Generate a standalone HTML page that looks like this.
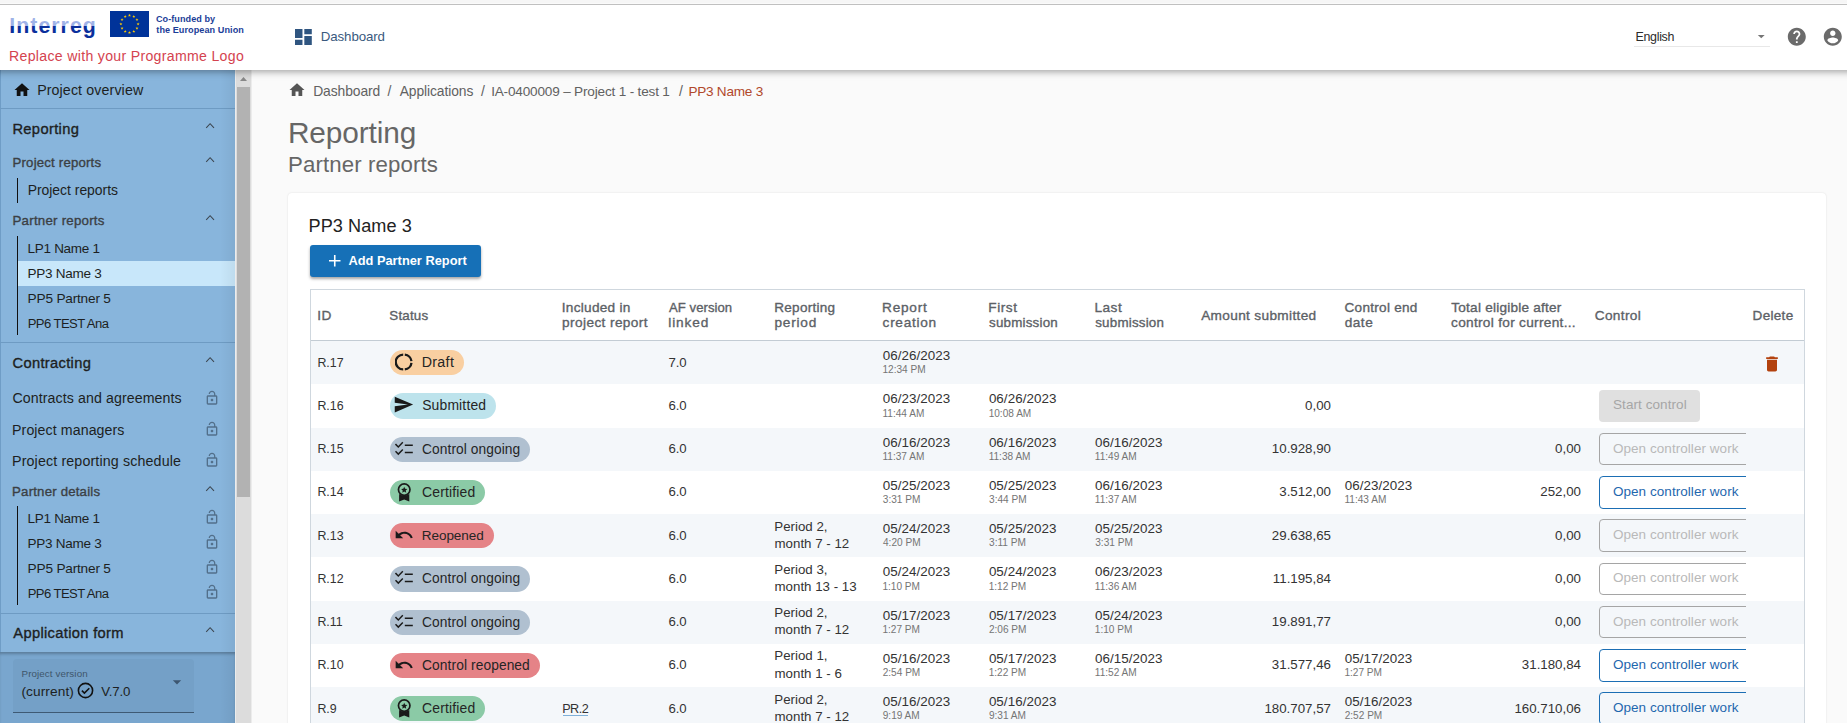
<!DOCTYPE html>
<html><head><meta charset="utf-8"><style>
html,body{margin:0;padding:0;width:1847px;height:723px;overflow:hidden;background:#fafafa;font-family:"Liberation Sans",sans-serif}
.t{position:absolute;white-space:nowrap;font-family:"Liberation Sans",sans-serif}
.r{position:absolute;display:block}
</style></head><body>
<div class="r" style="left:0px;top:0px;width:1847px;height:3px;background:#f6f6f6;z-index:7"></div>
<div class="r" style="left:0px;top:3px;width:1847px;height:1px;background:#fafafa;z-index:7"></div>
<div class="r" style="left:0px;top:4px;width:1847px;height:1px;background:#c0c0c0;z-index:7"></div>
<div class="r" style="left:-20px;top:5px;width:1887px;height:65px;background:#fff;box-shadow:0 2px 4px -1px rgba(0,0,0,.12),0 4px 5px 0 rgba(0,0,0,.12),0 1px 10px 0 rgba(0,0,0,.12);z-index:5"></div>
<svg class="r" style="left:0;top:0;z-index:6" width="105" height="45"><defs><linearGradient id="lg" gradientUnits="userSpaceOnUse" x1="0" y1="0" x2="0" y2="45"><stop offset="0" stop-color="#9fb2e7"/><stop offset="0.586" stop-color="#9fb2e7"/><stop offset="0.586" stop-color="#0b2f9c"/><stop offset="1" stop-color="#0b2f9c"/></linearGradient></defs><text x="9.3" y="32.8" font-family="Liberation Sans" font-weight="700" font-size="21.3" textLength="86.5" lengthAdjust="spacing" fill="url(#lg)">Interreg</text></svg>
<svg class="r" style="left:110px;top:11px;z-index:6" width="39" height="26" viewBox="0 0 39 26" preserveAspectRatio="none"><rect width="39" height="26" fill="#003399"/><polygon points="19.50,2.80 19.88,3.87 21.02,3.91 20.12,4.60 20.44,5.69 19.50,5.05 18.56,5.69 18.88,4.60 17.98,3.91 19.12,3.87" fill="#ffcc00"/><polygon points="23.80,3.95 24.18,5.03 25.32,5.06 24.42,5.75 24.74,6.85 23.80,6.20 22.86,6.85 23.18,5.75 22.28,5.06 23.42,5.03" fill="#ffcc00"/><polygon points="26.95,7.10 27.33,8.17 28.47,8.21 27.57,8.90 27.89,9.99 26.95,9.35 26.01,9.99 26.33,8.90 25.43,8.21 26.57,8.17" fill="#ffcc00"/><polygon points="28.10,11.40 28.48,12.47 29.62,12.51 28.72,13.20 29.04,14.29 28.10,13.65 27.16,14.29 27.48,13.20 26.58,12.51 27.72,12.47" fill="#ffcc00"/><polygon points="26.95,15.70 27.33,16.77 28.47,16.81 27.57,17.50 27.89,18.59 26.95,17.95 26.01,18.59 26.33,17.50 25.43,16.81 26.57,16.77" fill="#ffcc00"/><polygon points="23.80,18.85 24.18,19.92 25.32,19.95 24.42,20.65 24.74,21.74 23.80,21.10 22.86,21.74 23.18,20.65 22.28,19.95 23.42,19.92" fill="#ffcc00"/><polygon points="19.50,20.00 19.88,21.07 21.02,21.11 20.12,21.80 20.44,22.89 19.50,22.25 18.56,22.89 18.88,21.80 17.98,21.11 19.12,21.07" fill="#ffcc00"/><polygon points="15.20,18.85 15.58,19.92 16.72,19.95 15.82,20.65 16.14,21.74 15.20,21.10 14.26,21.74 14.58,20.65 13.68,19.95 14.82,19.92" fill="#ffcc00"/><polygon points="12.05,15.70 12.43,16.77 13.57,16.81 12.67,17.50 12.99,18.59 12.05,17.95 11.11,18.59 11.43,17.50 10.53,16.81 11.67,16.77" fill="#ffcc00"/><polygon points="10.90,11.40 11.28,12.47 12.42,12.51 11.52,13.20 11.84,14.29 10.90,13.65 9.96,14.29 10.28,13.20 9.38,12.51 10.52,12.47" fill="#ffcc00"/><polygon points="12.05,7.10 12.43,8.17 13.57,8.21 12.67,8.90 12.99,9.99 12.05,9.35 11.11,9.99 11.43,8.90 10.53,8.21 11.67,8.17" fill="#ffcc00"/><polygon points="15.20,3.95 15.58,5.03 16.72,5.06 15.82,5.75 16.14,6.85 15.20,6.20 14.26,6.85 14.58,5.75 13.68,5.06 14.82,5.03" fill="#ffcc00"/></svg>
<div class="t" style="left:156.03px;top:9.00px;font-size:9.08px;line-height:20px;color:#1b3d98;font-weight:700;letter-spacing:0.047px;z-index:6">Co-funded by</div>
<div class="t" style="left:156.29px;top:20.00px;font-size:9.11px;line-height:20px;color:#1b3d98;font-weight:700;letter-spacing:0.067px;z-index:6">the European Union</div>
<div class="t" style="left:9.04px;top:43.00px;font-size:14.11px;line-height:26px;color:#d4434f;letter-spacing:0.312px;z-index:6">Replace with your Programme Logo</div>
<svg class="r" style="left:295px;top:29px;z-index:6" width="16.8" height="16" viewBox="3 3 18 18" preserveAspectRatio="none"><path d="M3 13h8V3H3v10zm0 8h8v-6H3v6zm10 0h8V11h-8v10zm0-18v6h8V3h-8z" fill="#2f5580"/></svg>
<div class="t" style="left:320.81px;top:24.00px;font-size:13.31px;line-height:25px;color:#3a5a7e;letter-spacing:-0.108px;z-index:6">Dashboard</div>
<div class="t" style="left:1635.38px;top:25.00px;font-size:12.45px;line-height:24px;color:#2b2b2b;letter-spacing:-0.284px;z-index:6">English</div>
<div class="r" style="left:1634px;top:46px;width:136px;height:1px;background:#e8e8e8;z-index:6"></div>
<svg class="r" style="left:1752.5px;top:28.2px;z-index:6" width="16.5" height="16.5" viewBox="0 0 24 24" preserveAspectRatio="none"><path d="M7 10l5 5 5-5z" fill="#757575"/></svg>
<svg class="r" style="left:1786.2px;top:26px;z-index:6" width="21.6" height="21.6" viewBox="0 0 24 24" preserveAspectRatio="none"><path d="M12 2C6.48 2 2 6.48 2 12s4.48 10 10 10 10-4.48 10-10S17.52 2 12 2zm1 17h-2v-2h2v2zm2.07-7.75l-.9.92C13.45 12.9 13 13.5 13 15h-2v-.5c0-1.1.45-2.1 1.17-2.83l1.24-1.26c.37-.36.59-.86.59-1.41 0-1.1-.9-2-2-2s-2 .9-2 2H8c0-2.21 1.79-4 4-4s4 1.79 4 4c0 .88-.36 1.68-.93 2.25z" fill="#6b6b6b"/></svg>
<svg class="r" style="left:1822.2px;top:26px;z-index:6" width="21.6" height="21.6" viewBox="0 0 24 24" preserveAspectRatio="none"><path d="M12 2C6.48 2 2 6.48 2 12s4.48 10 10 10 10-4.48 10-10S17.52 2 12 2zm0 3c1.66 0 3 1.34 3 3s-1.34 3-3 3-3-1.34-3-3 1.34-3 3-3zm0 14.2c-2.5 0-4.71-1.28-6-3.22.03-1.99 4-3.08 6-3.08 1.99 0 5.970 1.09 6 3.08-1.29 1.94-3.5 3.22-6 3.22z" fill="#6b6b6b"/></svg>
<div class="r" style="left:252px;top:70px;width:1595px;height:653px;background:#fafafa;"></div>
<div class="r" style="left:0px;top:70px;width:235px;height:653px;background:#88b5dc;"></div>
<div class="r" style="left:0px;top:70px;width:1px;height:653px;background:#6f9dc6;"></div>
<div class="r" style="left:220px;top:70px;width:15px;height:653px;background:linear-gradient(90deg,rgba(0,0,0,0),rgba(0,0,0,.05));z-index:2"></div>
<svg class="r" style="left:12.5px;top:80.5px;" width="18" height="18" viewBox="0 0 24 24" preserveAspectRatio="none"><path d="M10 20v-6h4v6h5v-8h3L12 3 2 12h3v8z" fill="#111"/></svg>
<div class="t" style="left:37.13px;top:77.00px;font-size:14.23px;line-height:26px;color:#1d1f22;letter-spacing:0.116px;">Project overview</div>
<div class="r" style="left:0px;top:108px;width:235px;height:1px;background:#6e9bc3;"></div>
<div class="t" style="left:12.39px;top:116.00px;font-size:14.69px;line-height:26px;color:#1d1f22;-webkit-text-stroke:0.35px #1d1f22;letter-spacing:0.357px;">Reporting</div>
<svg class="r" style="left:204px;top:122.1px;" width="12" height="8" viewBox="0 0 12 8" preserveAspectRatio="none"><path d="M2.2 5.8 L6.1 1.7 L10 5.8" fill="none" stroke="#3c4650" stroke-width="1.05"/></svg>
<div class="t" style="left:12.52px;top:150.00px;font-size:13.21px;line-height:25px;color:#3b3f44;-webkit-text-stroke:0.35px #3b3f44;letter-spacing:0.190px;">Project reports</div>
<svg class="r" style="left:204px;top:156.3px;" width="12" height="8" viewBox="0 0 12 8" preserveAspectRatio="none"><path d="M2.2 5.8 L6.1 1.7 L10 5.8" fill="none" stroke="#3c4650" stroke-width="1.05"/></svg>
<div class="r" style="left:17px;top:178px;width:1.3px;height:25px;background:#111;"></div>
<div class="t" style="left:27.66px;top:177.00px;font-size:13.95px;line-height:26px;color:#1d1f22;letter-spacing:-0.019px;">Project reports</div>
<div class="t" style="left:12.51px;top:208.00px;font-size:13.3px;line-height:25px;color:#3b3f44;-webkit-text-stroke:0.35px #3b3f44;letter-spacing:0.233px;">Partner reports</div>
<svg class="r" style="left:204px;top:214px;" width="12" height="8" viewBox="0 0 12 8" preserveAspectRatio="none"><path d="M2.2 5.8 L6.1 1.7 L10 5.8" fill="none" stroke="#3c4650" stroke-width="1.05"/></svg>
<div class="r" style="left:18px;top:261px;width:217px;height:25px;background:#c8e7fa;"></div>
<div class="r" style="left:17px;top:236px;width:1.3px;height:99px;background:#111;"></div>
<div class="t" style="left:27.59px;top:236.00px;font-size:13.5px;line-height:25px;color:#1d1f22;letter-spacing:-0.297px;">LP1 Name 1</div>
<div class="t" style="left:27.59px;top:261.00px;font-size:13.54px;line-height:25px;color:#1d1f22;letter-spacing:-0.284px;">PP3 Name 3</div>
<div class="t" style="left:27.58px;top:286.00px;font-size:13.63px;line-height:25px;color:#1d1f22;letter-spacing:-0.185px;">PP5 Partner 5</div>
<div class="t" style="left:27.63px;top:311.00px;font-size:13.08px;line-height:25px;color:#1d1f22;letter-spacing:-0.557px;">PP6 TEST Ana</div>
<div class="r" style="left:0px;top:342px;width:235px;height:1px;background:#6e9bc3;"></div>
<div class="t" style="left:12.45px;top:350.00px;font-size:14.68px;line-height:26px;color:#1d1f22;-webkit-text-stroke:0.35px #1d1f22;letter-spacing:0.342px;">Contracting</div>
<svg class="r" style="left:204px;top:356px;" width="12" height="8" viewBox="0 0 12 8" preserveAspectRatio="none"><path d="M2.2 5.8 L6.1 1.7 L10 5.8" fill="none" stroke="#3c4650" stroke-width="1.05"/></svg>
<div class="t" style="left:12.48px;top:385.00px;font-size:14.18px;line-height:26px;color:#1d1f22;letter-spacing:0.093px;">Contracts and agreements</div>
<svg class="r" style="left:203.5px;top:390px;" width="16" height="16" viewBox="0 0 24 24" preserveAspectRatio="none"><path d="M12 17c1.1 0 2-.9 2-2s-.9-2-2-2-2 .9-2 2 .9 2 2 2zm6-9h-1V6c0-2.76-2.24-5-5-5S7 3.24 7 6h1.9c0-1.71 1.39-3.1 3.1-3.1 1.71 0 3.1 1.39 3.1 3.1v2H6c-1.1 0-2 .9-2 2v10c0 1.1.9 2 2 2h12c1.1 0 2-.9 2-2V10c0-1.1-.9-2-2-2zm0 12H6V10h12v10z" fill="#526f8a"/></svg>
<div class="t" style="left:12.04px;top:417.00px;font-size:14.18px;line-height:26px;color:#1d1f22;letter-spacing:0.090px;">Project managers</div>
<svg class="r" style="left:203.5px;top:420.5px;" width="16" height="16" viewBox="0 0 24 24" preserveAspectRatio="none"><path d="M12 17c1.1 0 2-.9 2-2s-.9-2-2-2-2 .9-2 2 .9 2 2 2zm6-9h-1V6c0-2.76-2.24-5-5-5S7 3.24 7 6h1.9c0-1.71 1.39-3.1 3.1-3.1 1.71 0 3.1 1.39 3.1 3.1v2H6c-1.1 0-2 .9-2 2v10c0 1.1.9 2 2 2h12c1.1 0 2-.9 2-2V10c0-1.1-.9-2-2-2zm0 12H6V10h12v10z" fill="#526f8a"/></svg>
<div class="t" style="left:12.03px;top:448.00px;font-size:14.28px;line-height:26px;color:#1d1f22;letter-spacing:0.128px;">Project reporting schedule</div>
<svg class="r" style="left:203.5px;top:452px;" width="16" height="16" viewBox="0 0 24 24" preserveAspectRatio="none"><path d="M12 17c1.1 0 2-.9 2-2s-.9-2-2-2-2 .9-2 2 .9 2 2 2zm6-9h-1V6c0-2.76-2.24-5-5-5S7 3.24 7 6h1.9c0-1.71 1.39-3.1 3.1-3.1 1.71 0 3.1 1.39 3.1 3.1v2H6c-1.1 0-2 .9-2 2v10c0 1.1.9 2 2 2h12c1.1 0 2-.9 2-2V10c0-1.1-.9-2-2-2zm0 12H6V10h12v10z" fill="#526f8a"/></svg>
<div class="t" style="left:12.11px;top:479.00px;font-size:13.23px;line-height:25px;color:#3b3f44;-webkit-text-stroke:0.35px #3b3f44;letter-spacing:0.190px;">Partner details</div>
<svg class="r" style="left:204px;top:485.4px;" width="12" height="8" viewBox="0 0 12 8" preserveAspectRatio="none"><path d="M2.2 5.8 L6.1 1.7 L10 5.8" fill="none" stroke="#3c4650" stroke-width="1.05"/></svg>
<div class="r" style="left:17px;top:506px;width:1.3px;height:99px;background:#111;"></div>
<div class="t" style="left:27.59px;top:506.00px;font-size:13.5px;line-height:25px;color:#1d1f22;letter-spacing:-0.297px;">LP1 Name 1</div>
<svg class="r" style="left:203.5px;top:509.1px;" width="16" height="16" viewBox="0 0 24 24" preserveAspectRatio="none"><path d="M12 17c1.1 0 2-.9 2-2s-.9-2-2-2-2 .9-2 2 .9 2 2 2zm6-9h-1V6c0-2.76-2.24-5-5-5S7 3.24 7 6h1.9c0-1.71 1.39-3.1 3.1-3.1 1.71 0 3.1 1.39 3.1 3.1v2H6c-1.1 0-2 .9-2 2v10c0 1.1.9 2 2 2h12c1.1 0 2-.9 2-2V10c0-1.1-.9-2-2-2zm0 12H6V10h12v10z" fill="#526f8a"/></svg>
<div class="t" style="left:27.59px;top:531.00px;font-size:13.54px;line-height:25px;color:#1d1f22;letter-spacing:-0.284px;">PP3 Name 3</div>
<svg class="r" style="left:203.5px;top:534.4px;" width="16" height="16" viewBox="0 0 24 24" preserveAspectRatio="none"><path d="M12 17c1.1 0 2-.9 2-2s-.9-2-2-2-2 .9-2 2 .9 2 2 2zm6-9h-1V6c0-2.76-2.24-5-5-5S7 3.24 7 6h1.9c0-1.71 1.39-3.1 3.1-3.1 1.71 0 3.1 1.39 3.1 3.1v2H6c-1.1 0-2 .9-2 2v10c0 1.1.9 2 2 2h12c1.1 0 2-.9 2-2V10c0-1.1-.9-2-2-2zm0 12H6V10h12v10z" fill="#526f8a"/></svg>
<div class="t" style="left:27.58px;top:556.00px;font-size:13.63px;line-height:25px;color:#1d1f22;letter-spacing:-0.185px;">PP5 Partner 5</div>
<svg class="r" style="left:203.5px;top:559px;" width="16" height="16" viewBox="0 0 24 24" preserveAspectRatio="none"><path d="M12 17c1.1 0 2-.9 2-2s-.9-2-2-2-2 .9-2 2 .9 2 2 2zm6-9h-1V6c0-2.76-2.24-5-5-5S7 3.24 7 6h1.9c0-1.71 1.39-3.1 3.1-3.1 1.71 0 3.1 1.39 3.1 3.1v2H6c-1.1 0-2 .9-2 2v10c0 1.1.9 2 2 2h12c1.1 0 2-.9 2-2V10c0-1.1-.9-2-2-2zm0 12H6V10h12v10z" fill="#526f8a"/></svg>
<div class="t" style="left:27.63px;top:581.00px;font-size:13.08px;line-height:25px;color:#1d1f22;letter-spacing:-0.557px;">PP6 TEST Ana</div>
<svg class="r" style="left:203.5px;top:584px;" width="16" height="16" viewBox="0 0 24 24" preserveAspectRatio="none"><path d="M12 17c1.1 0 2-.9 2-2s-.9-2-2-2-2 .9-2 2 .9 2 2 2zm6-9h-1V6c0-2.76-2.24-5-5-5S7 3.24 7 6h1.9c0-1.71 1.39-3.1 3.1-3.1 1.71 0 3.1 1.39 3.1 3.1v2H6c-1.1 0-2 .9-2 2v10c0 1.1.9 2 2 2h12c1.1 0 2-.9 2-2V10c0-1.1-.9-2-2-2zm0 12H6V10h12v10z" fill="#526f8a"/></svg>
<div class="r" style="left:0px;top:613px;width:235px;height:1px;background:#6e9bc3;"></div>
<div class="t" style="left:13.27px;top:620.00px;font-size:14.7px;line-height:26px;color:#1d1f22;-webkit-text-stroke:0.35px #1d1f22;letter-spacing:0.333px;">Application form</div>
<svg class="r" style="left:204px;top:626px;" width="12" height="8" viewBox="0 0 12 8" preserveAspectRatio="none"><path d="M2.2 5.8 L6.1 1.7 L10 5.8" fill="none" stroke="#3c4650" stroke-width="1.05"/></svg>
<div class="r" style="left:0px;top:652px;width:235px;height:71px;background:#79a6ce;box-shadow:inset 0 3px 3px -1px rgba(0,0,0,.25)"></div>
<div class="r" style="left:13px;top:659px;width:181px;height:53px;background:#74a0c7;border-radius:4px 4px 0 0"></div>
<div class="r" style="left:13px;top:711.5px;width:181px;height:1px;background:#3e5a74;"></div>
<div class="t" style="left:21.50px;top:663.00px;font-size:9.8px;line-height:21px;color:#3f566b;letter-spacing:0.095px;">Project version</div>
<div class="t" style="left:21.45px;top:679.00px;font-size:13.69px;line-height:25px;color:#1d1f22;letter-spacing:0.084px;">(current)</div>
<svg class="r" style="left:77px;top:682px;" width="17" height="17" viewBox="0 0 17 17" preserveAspectRatio="none"><circle cx="8.5" cy="8.5" r="7.1" fill="none" stroke="#111" stroke-width="1.6"/><path d="M4.9 8.6 L7.4 11.1 L12.3 6.2" fill="none" stroke="#111" stroke-width="1.6"/></svg>
<div class="t" style="left:101.24px;top:679.00px;font-size:13.27px;line-height:25px;color:#1d1f22;letter-spacing:-0.123px;">V.7.0</div>
<svg class="r" style="left:167px;top:672px;" width="20" height="20" viewBox="0 0 24 24" preserveAspectRatio="none"><path d="M7 10l5 5 5-5z" fill="#3d5670"/></svg>
<div class="r" style="left:235px;top:70px;width:17px;height:653px;background:#dcdcdc;border-left:1px solid #ececec;border-right:1px solid #ececec;box-sizing:border-box"></div>
<svg class="r" style="left:240px;top:77px;" width="7" height="4" viewBox="0 0 7 4" preserveAspectRatio="none"><path d="M0 4 L3.5 0 L7 4z" fill="#888"/></svg>
<div class="r" style="left:237px;top:87px;width:13px;height:410px;background:#b2b2b2;"></div>
<svg class="r" style="left:287.5px;top:81px;" width="18" height="18" viewBox="0 0 24 24" preserveAspectRatio="none"><path d="M10 20v-6h4v6h5v-8h3L12 3 2 12h3v8z" fill="#555"/></svg>
<div class="t" style="left:313.16px;top:78.00px;font-size:13.86px;line-height:26px;color:#616161;letter-spacing:-0.084px;">Dashboard</div>
<div class="t" style="left:387.60px;top:78.00px;font-size:14px;line-height:26px;color:#616161;">/</div>
<div class="t" style="left:399.67px;top:78.00px;font-size:13.84px;line-height:26px;color:#616161;letter-spacing:-0.082px;">Applications</div>
<div class="t" style="left:481.00px;top:78.00px;font-size:14px;line-height:26px;color:#616161;">/</div>
<div class="t" style="left:491.15px;top:79.00px;font-size:13.59px;line-height:25px;color:#616161;letter-spacing:-0.180px;">IA-0400009 – Project 1 - test 1</div>
<div class="t" style="left:678.90px;top:78.00px;font-size:14px;line-height:26px;color:#616161;">/</div>
<div class="t" style="left:688.38px;top:79.00px;font-size:13.6px;line-height:25px;color:#b1482b;letter-spacing:-0.243px;">PP3 Name 3</div>
<div class="t" style="left:287.96px;top:111.00px;font-size:29.8px;line-height:43px;color:#666;letter-spacing:-0.106px;">Reporting</div>
<div class="t" style="left:288.08px;top:147.00px;font-size:22.24px;line-height:35px;color:#666;letter-spacing:0.114px;">Partner reports</div>
<div class="r" style="left:288px;top:193px;width:1538px;height:600px;background:#fff;border-radius:4px;box-shadow:0 0 2px rgba(0,0,0,.12)"></div>
<div class="t" style="left:308.51px;top:211.00px;font-size:18.13px;line-height:30px;color:#222;letter-spacing:0.077px;">PP3 Name 3</div>
<div class="r" style="left:310px;top:245px;width:171px;height:32px;background:#1670b7;border-radius:3px;box-shadow:0 2px 3px rgba(0,0,0,.35)"></div>
<svg class="r" style="left:329px;top:255.3px;" width="11.5" height="11.5" viewBox="0 0 11.5 11.5" preserveAspectRatio="none"><path d="M5.75 0V11.5M0 5.75H11.5" stroke="#fff" stroke-width="1.6"/></svg>
<div class="t" style="left:348.38px;top:248.00px;font-size:12.82px;line-height:25px;color:#fff;font-weight:700;letter-spacing:0.014px;">Add Partner Report</div>
<div class="r" style="left:310px;top:289px;width:1495px;height:440px;background:#fff;border:1px solid #cfd7de;box-sizing:border-box"></div>
<div class="r" style="left:311px;top:340px;width:1493px;height:1.2px;background:#c3ccd4;"></div>
<div class="t" style="left:317.14px;top:303.00px;font-size:13.65px;line-height:25px;color:#5c6166;-webkit-text-stroke:0.35px #5c6166;letter-spacing:0.663px;">ID</div>
<div class="t" style="left:389.29px;top:303.00px;font-size:13.36px;line-height:25px;color:#5c6166;-webkit-text-stroke:0.35px #5c6166;letter-spacing:0.203px;">Status</div>
<div class="t" style="left:561.74px;top:295.00px;font-size:13.61px;line-height:25px;color:#5c6166;-webkit-text-stroke:0.35px #5c6166;letter-spacing:0.281px;">Included in</div>
<div class="t" style="left:562.12px;top:310.00px;font-size:13.65px;line-height:25px;color:#5c6166;-webkit-text-stroke:0.35px #5c6166;letter-spacing:0.389px;">project report</div>
<div class="t" style="left:669.07px;top:295.00px;font-size:13.1px;line-height:25px;color:#5c6166;-webkit-text-stroke:0.35px #5c6166;letter-spacing:0.052px;">AF version</div>
<div class="t" style="left:668.18px;top:310.00px;font-size:13.65px;line-height:25px;color:#5c6166;-webkit-text-stroke:0.35px #5c6166;letter-spacing:0.927px;">linked</div>
<div class="t" style="left:774.29px;top:295.00px;font-size:13.53px;line-height:25px;color:#5c6166;-webkit-text-stroke:0.35px #5c6166;letter-spacing:0.277px;">Reporting</div>
<div class="t" style="left:774.52px;top:310.00px;font-size:13.65px;line-height:25px;color:#5c6166;-webkit-text-stroke:0.35px #5c6166;letter-spacing:0.763px;">period</div>
<div class="t" style="left:882.08px;top:295.00px;font-size:13.65px;line-height:25px;color:#5c6166;-webkit-text-stroke:0.35px #5c6166;letter-spacing:0.750px;">Report</div>
<div class="t" style="left:882.62px;top:310.00px;font-size:13.65px;line-height:25px;color:#5c6166;-webkit-text-stroke:0.35px #5c6166;letter-spacing:0.701px;">creation</div>
<div class="t" style="left:988.28px;top:295.00px;font-size:13.65px;line-height:25px;color:#5c6166;-webkit-text-stroke:0.35px #5c6166;letter-spacing:0.547px;">First</div>
<div class="t" style="left:989.03px;top:310.00px;font-size:13.37px;line-height:25px;color:#5c6166;-webkit-text-stroke:0.35px #5c6166;letter-spacing:0.207px;">submission</div>
<div class="t" style="left:1094.48px;top:295.00px;font-size:13.65px;line-height:25px;color:#5c6166;-webkit-text-stroke:0.35px #5c6166;letter-spacing:0.473px;">Last</div>
<div class="t" style="left:1095.23px;top:310.00px;font-size:13.37px;line-height:25px;color:#5c6166;-webkit-text-stroke:0.35px #5c6166;letter-spacing:0.207px;">submission</div>
<div class="t" style="left:1201.17px;top:303.00px;font-size:13.64px;line-height:25px;color:#5c6166;-webkit-text-stroke:0.35px #5c6166;letter-spacing:0.345px;">Amount submitted</div>
<div class="t" style="left:1344.51px;top:295.00px;font-size:13.56px;line-height:25px;color:#5c6166;-webkit-text-stroke:0.35px #5c6166;letter-spacing:0.286px;">Control end</div>
<div class="t" style="left:1344.63px;top:310.00px;font-size:13.65px;line-height:25px;color:#5c6166;-webkit-text-stroke:0.35px #5c6166;letter-spacing:0.538px;">date</div>
<div class="t" style="left:1451.29px;top:295.00px;font-size:13.58px;line-height:25px;color:#5c6166;-webkit-text-stroke:0.35px #5c6166;letter-spacing:0.234px;">Total eligible after</div>
<div class="t" style="left:1451.02px;top:310.00px;font-size:13.65px;line-height:25px;color:#5c6166;-webkit-text-stroke:0.35px #5c6166;letter-spacing:0.304px;">control for current...</div>
<div class="t" style="left:1594.71px;top:303.00px;font-size:13.65px;line-height:25px;color:#5c6166;-webkit-text-stroke:0.35px #5c6166;letter-spacing:0.351px;">Control</div>
<div class="t" style="left:1752.59px;top:303.00px;font-size:13.54px;line-height:25px;color:#5c6166;-webkit-text-stroke:0.35px #5c6166;letter-spacing:0.295px;">Delete</div>
<div class="r" style="left:311px;top:341.0px;width:1493px;height:43.25px;background:#f4f7fa;"></div>
<div class="t" style="left:317.38px;top:351.00px;font-size:12.4px;line-height:24px;color:#333;">R.17</div>
<div class="r" style="left:390px;top:350.12px;width:74px;height:25.2px;background:#f9cfa1;border-radius:13px"></div>
<svg class="r" style="left:395.3px;top:353.025px;" width="18" height="18" viewBox="0 0 18 18" preserveAspectRatio="none"><g fill="none" stroke="#1a1a1a" stroke-width="2.3"><path d="M8.2 1.55 A7.45 7.45 0 0 0 8.2 16.45"/><path d="M9.8 1.55 A7.45 7.45 0 0 1 16.45 8.2"/><path d="M16.45 9.8 A7.45 7.45 0 0 1 9.8 16.45"/></g></svg>
<div class="t" style="left:421.63px;top:349.00px;font-size:14.26px;line-height:26px;color:#252525;letter-spacing:0.343px;">Draft</div>
<div class="t" style="left:668.42px;top:350.00px;font-size:13.19px;line-height:25px;color:#333;letter-spacing:-0.072px;">7.0</div>
<div class="t" style="left:882.68px;top:343.00px;font-size:13.4px;line-height:25px;color:#333;letter-spacing:0.050px;">06/26/2023</div>
<div class="t" style="left:882.43px;top:359.00px;font-size:10.1px;line-height:21px;color:#757575;">12:34 PM</div>
<svg class="r" style="left:1762px;top:354.025px;" width="20" height="20" viewBox="0 0 24 24" preserveAspectRatio="none"><path d="M6 19c0 1.1.9 2 2 2h8c1.1 0 2-.9 2-2V7H6v12zM19 4h-3.5l-1-1h-5l-1 1H5v2h14V4z" fill="#b3420e"/></svg>
<div class="t" style="left:317.38px;top:394.00px;font-size:12.4px;line-height:24px;color:#333;">R.16</div>
<div class="r" style="left:390px;top:393.38px;width:106px;height:25.2px;background:#bde3ec;border-radius:13px"></div>
<svg class="r" style="left:393.3px;top:393.97499999999997px;" width="21" height="21" viewBox="0 0 24 24" preserveAspectRatio="none"><path d="M2.01 21L23 12 2.01 3 2 10l15 2-15 2z" fill="#1a1a1a"/></svg>
<div class="t" style="left:422.17px;top:392.00px;font-size:13.9px;line-height:26px;color:#252525;letter-spacing:0.168px;">Submitted</div>
<div class="t" style="left:668.43px;top:393.00px;font-size:13.19px;line-height:25px;color:#333;letter-spacing:-0.075px;">6.0</div>
<div class="t" style="left:882.68px;top:386.00px;font-size:13.4px;line-height:25px;color:#333;letter-spacing:0.050px;">06/23/2023</div>
<div class="t" style="left:882.43px;top:403.00px;font-size:10.1px;line-height:21px;color:#757575;">11:44 AM</div>
<div class="t" style="left:988.88px;top:386.00px;font-size:13.4px;line-height:25px;color:#333;letter-spacing:0.050px;">06/26/2023</div>
<div class="t" style="left:988.63px;top:403.00px;font-size:10.1px;line-height:21px;color:#757575;">10:08 AM</div>
<div class="t" style="left:0.00px;top:393.00px;font-size:13.3px;line-height:25px;color:#333;left:auto;right:516px;">0,00</div>
<div class="r" style="left:1599.2px;top:389.68px;width:101px;height:32.4px;background:#e0e0e0;border-radius:4px"></div>
<div class="t" style="left:1612.99px;top:392.00px;font-size:13.54px;line-height:25px;color:#a6a6a6;letter-spacing:0.060px;">Start control</div>
<div class="r" style="left:311px;top:427.5px;width:1493px;height:43.25px;background:#f4f7fa;"></div>
<div class="t" style="left:317.38px;top:437.00px;font-size:12.4px;line-height:24px;color:#333;">R.15</div>
<div class="r" style="left:390px;top:436.62px;width:140px;height:25.2px;background:#b0c0d0;border-radius:13px"></div>
<svg class="r" style="left:395.3px;top:439.525px;" width="19" height="18" viewBox="0 0 19 18" preserveAspectRatio="none"><g fill="none" stroke="#1a1a1a" stroke-width="1.45"><path d="M0.5 4.1 L3.3 6.9 L7.8 2.3"/><path d="M0.5 11.3 L3.3 14.1 L7.8 9.5"/><path d="M9.8 5.3 H17.8 M9.8 12.5 H17.8" stroke-width="1.6"/></g></svg>
<div class="t" style="left:422.10px;top:437.00px;font-size:13.75px;line-height:25px;color:#252525;letter-spacing:0.072px;">Control ongoing</div>
<div class="t" style="left:668.43px;top:436.00px;font-size:13.19px;line-height:25px;color:#333;letter-spacing:-0.075px;">6.0</div>
<div class="t" style="left:882.68px;top:430.00px;font-size:13.4px;line-height:25px;color:#333;letter-spacing:0.050px;">06/16/2023</div>
<div class="t" style="left:882.43px;top:446.00px;font-size:10.1px;line-height:21px;color:#757575;">11:37 AM</div>
<div class="t" style="left:988.88px;top:430.00px;font-size:13.4px;line-height:25px;color:#333;letter-spacing:0.050px;">06/16/2023</div>
<div class="t" style="left:988.63px;top:446.00px;font-size:10.1px;line-height:21px;color:#757575;">11:38 AM</div>
<div class="t" style="left:1095.08px;top:430.00px;font-size:13.4px;line-height:25px;color:#333;letter-spacing:0.050px;">06/16/2023</div>
<div class="t" style="left:1094.83px;top:446.00px;font-size:10.1px;line-height:21px;color:#757575;">11:49 AM</div>
<div class="t" style="left:0.00px;top:436.00px;font-size:13.3px;line-height:25px;color:#333;left:auto;right:516px;">10.928,90</div>
<div class="t" style="left:0.00px;top:436.00px;font-size:13.3px;line-height:25px;color:#333;left:auto;right:266px;">0,00</div>
<div class="r" style="left:1599.2px;top:432.93px;width:147px;height:32.4px;overflow:hidden"><div style="position:absolute;left:0;top:0;width:170px;height:32.4px;box-sizing:border-box;border:1px solid #a5a5a5;border-radius:4px"></div></div>
<div class="t" style="left:1612.96px;top:436.00px;font-size:13.51px;line-height:25px;color:#b9b9b9;letter-spacing:0.051px;">Open controller work</div>
<div class="t" style="left:317.38px;top:480.00px;font-size:12.4px;line-height:24px;color:#333;">R.14</div>
<div class="r" style="left:390px;top:479.88px;width:95px;height:25.2px;background:#8bcaa6;border-radius:13px"></div>
<svg class="r" style="left:395.3px;top:482.775px;" width="18" height="20" viewBox="0 0 18 20" preserveAspectRatio="none"><path d="M4.1 11 V18.6 L9.2 16.4 L14.3 18.6 V11 Q9.2 14.6 4.1 11z" fill="#1a1a1a"/><circle cx="9.2" cy="6.6" r="5.75" fill="none" stroke="#1a1a1a" stroke-width="1.7"/><path d="M9.2 3.7l.95 2.05 2.2.2-1.65 1.5.5 2.2L9.2 8.5l-1.95 1.15.5-2.2-1.65-1.5 2.2-.2z" fill="#1a1a1a"/></svg>
<div class="t" style="left:422.09px;top:479.00px;font-size:13.94px;line-height:26px;color:#252525;letter-spacing:0.150px;">Certified</div>
<div class="t" style="left:668.43px;top:479.00px;font-size:13.19px;line-height:25px;color:#333;letter-spacing:-0.075px;">6.0</div>
<div class="t" style="left:882.68px;top:473.00px;font-size:13.4px;line-height:25px;color:#333;letter-spacing:0.050px;">05/25/2023</div>
<div class="t" style="left:882.82px;top:489.00px;font-size:10.1px;line-height:21px;color:#757575;">3:31 PM</div>
<div class="t" style="left:988.88px;top:473.00px;font-size:13.4px;line-height:25px;color:#333;letter-spacing:0.050px;">05/25/2023</div>
<div class="t" style="left:989.02px;top:489.00px;font-size:10.1px;line-height:21px;color:#757575;">3:44 PM</div>
<div class="t" style="left:1095.08px;top:473.00px;font-size:13.4px;line-height:25px;color:#333;letter-spacing:0.050px;">06/16/2023</div>
<div class="t" style="left:1094.83px;top:489.00px;font-size:10.1px;line-height:21px;color:#757575;">11:37 AM</div>
<div class="t" style="left:1344.68px;top:473.00px;font-size:13.4px;line-height:25px;color:#333;letter-spacing:0.050px;">06/23/2023</div>
<div class="t" style="left:1344.43px;top:489.00px;font-size:10.1px;line-height:21px;color:#757575;">11:43 AM</div>
<div class="t" style="left:0.00px;top:479.00px;font-size:13.3px;line-height:25px;color:#333;left:auto;right:516px;">3.512,00</div>
<div class="t" style="left:0.00px;top:479.00px;font-size:13.3px;line-height:25px;color:#333;left:auto;right:266px;">252,00</div>
<div class="r" style="left:1599.2px;top:476.18px;width:147px;height:32.4px;overflow:hidden"><div style="position:absolute;left:0;top:0;width:170px;height:32.4px;box-sizing:border-box;border:1px solid #1b6eb4;border-radius:4px"></div></div>
<div class="t" style="left:1612.96px;top:479.00px;font-size:13.51px;line-height:25px;color:#1f67ae;letter-spacing:0.051px;">Open controller work</div>
<div class="r" style="left:311px;top:514.0px;width:1493px;height:43.25px;background:#f4f7fa;"></div>
<div class="t" style="left:317.38px;top:524.00px;font-size:12.4px;line-height:24px;color:#333;">R.13</div>
<div class="r" style="left:390px;top:523.12px;width:104px;height:25.2px;background:#e58387;border-radius:13px"></div>
<svg class="r" style="left:394.3px;top:525.025px;" width="20" height="20" viewBox="0 0 24 24" preserveAspectRatio="none"><path d="M12.5 8c-2.650 0-5.05.99-6.9 2.6L2 7v9h9l-3.62-3.62c1.39-1.16 3.16-1.88 5.12-1.88 3.54 0 6.55 2.31 7.6 5.5l2.37-.78C21.08 11.03 17.15 8 12.5 8z" fill="#1a1a1a"/></svg>
<div class="t" style="left:421.69px;top:523.00px;font-size:13.54px;line-height:25px;color:#252525;letter-spacing:-0.044px;">Reopened</div>
<div class="t" style="left:668.43px;top:523.00px;font-size:13.19px;line-height:25px;color:#333;letter-spacing:-0.075px;">6.0</div>
<div class="t" style="left:774.31px;top:514.00px;font-size:13.3px;line-height:25px;color:#333;">Period 2,</div>
<div class="t" style="left:774.52px;top:531.00px;font-size:13.3px;line-height:25px;color:#333;">month 7 - 12</div>
<div class="t" style="left:882.68px;top:516.00px;font-size:13.4px;line-height:25px;color:#333;letter-spacing:0.050px;">05/24/2023</div>
<div class="t" style="left:882.97px;top:532.00px;font-size:10.1px;line-height:21px;color:#757575;">4:20 PM</div>
<div class="t" style="left:988.88px;top:516.00px;font-size:13.4px;line-height:25px;color:#333;letter-spacing:0.050px;">05/25/2023</div>
<div class="t" style="left:989.02px;top:532.00px;font-size:10.1px;line-height:21px;color:#757575;">3:11 PM</div>
<div class="t" style="left:1095.08px;top:516.00px;font-size:13.4px;line-height:25px;color:#333;letter-spacing:0.050px;">05/25/2023</div>
<div class="t" style="left:1095.22px;top:532.00px;font-size:10.1px;line-height:21px;color:#757575;">3:31 PM</div>
<div class="t" style="left:0.00px;top:523.00px;font-size:13.3px;line-height:25px;color:#333;left:auto;right:516px;">29.638,65</div>
<div class="t" style="left:0.00px;top:523.00px;font-size:13.3px;line-height:25px;color:#333;left:auto;right:266px;">0,00</div>
<div class="r" style="left:1599.2px;top:519.42px;width:147px;height:32.4px;overflow:hidden"><div style="position:absolute;left:0;top:0;width:170px;height:32.4px;box-sizing:border-box;border:1px solid #a5a5a5;border-radius:4px"></div></div>
<div class="t" style="left:1612.96px;top:522.00px;font-size:13.51px;line-height:25px;color:#b9b9b9;letter-spacing:0.051px;">Open controller work</div>
<div class="t" style="left:317.38px;top:567.00px;font-size:12.4px;line-height:24px;color:#333;">R.12</div>
<div class="r" style="left:390px;top:566.38px;width:140px;height:25.2px;background:#b0c0d0;border-radius:13px"></div>
<svg class="r" style="left:395.3px;top:569.275px;" width="19" height="18" viewBox="0 0 19 18" preserveAspectRatio="none"><g fill="none" stroke="#1a1a1a" stroke-width="1.45"><path d="M0.5 4.1 L3.3 6.9 L7.8 2.3"/><path d="M0.5 11.3 L3.3 14.1 L7.8 9.5"/><path d="M9.8 5.3 H17.8 M9.8 12.5 H17.8" stroke-width="1.6"/></g></svg>
<div class="t" style="left:422.10px;top:566.00px;font-size:13.75px;line-height:25px;color:#252525;letter-spacing:0.072px;">Control ongoing</div>
<div class="t" style="left:668.43px;top:566.00px;font-size:13.19px;line-height:25px;color:#333;letter-spacing:-0.075px;">6.0</div>
<div class="t" style="left:774.31px;top:557.00px;font-size:13.3px;line-height:25px;color:#333;">Period 3,</div>
<div class="t" style="left:774.52px;top:574.00px;font-size:13.3px;line-height:25px;color:#333;">month 13 - 13</div>
<div class="t" style="left:882.68px;top:559.00px;font-size:13.4px;line-height:25px;color:#333;letter-spacing:0.050px;">05/24/2023</div>
<div class="t" style="left:882.43px;top:576.00px;font-size:10.1px;line-height:21px;color:#757575;">1:10 PM</div>
<div class="t" style="left:988.88px;top:559.00px;font-size:13.4px;line-height:25px;color:#333;letter-spacing:0.050px;">05/24/2023</div>
<div class="t" style="left:988.63px;top:576.00px;font-size:10.1px;line-height:21px;color:#757575;">1:12 PM</div>
<div class="t" style="left:1095.08px;top:559.00px;font-size:13.4px;line-height:25px;color:#333;letter-spacing:0.050px;">06/23/2023</div>
<div class="t" style="left:1094.83px;top:576.00px;font-size:10.1px;line-height:21px;color:#757575;">11:36 AM</div>
<div class="t" style="left:0.00px;top:566.00px;font-size:13.3px;line-height:25px;color:#333;left:auto;right:516px;">11.195,84</div>
<div class="t" style="left:0.00px;top:566.00px;font-size:13.3px;line-height:25px;color:#333;left:auto;right:266px;">0,00</div>
<div class="r" style="left:1599.2px;top:562.67px;width:147px;height:32.4px;overflow:hidden"><div style="position:absolute;left:0;top:0;width:170px;height:32.4px;box-sizing:border-box;border:1px solid #a5a5a5;border-radius:4px"></div></div>
<div class="t" style="left:1612.96px;top:565.00px;font-size:13.51px;line-height:25px;color:#b9b9b9;letter-spacing:0.051px;">Open controller work</div>
<div class="r" style="left:311px;top:600.5px;width:1493px;height:43.25px;background:#f4f7fa;"></div>
<div class="t" style="left:317.38px;top:610.00px;font-size:12.4px;line-height:24px;color:#333;">R.11</div>
<div class="r" style="left:390px;top:609.62px;width:140px;height:25.2px;background:#b0c0d0;border-radius:13px"></div>
<svg class="r" style="left:395.3px;top:612.525px;" width="19" height="18" viewBox="0 0 19 18" preserveAspectRatio="none"><g fill="none" stroke="#1a1a1a" stroke-width="1.45"><path d="M0.5 4.1 L3.3 6.9 L7.8 2.3"/><path d="M0.5 11.3 L3.3 14.1 L7.8 9.5"/><path d="M9.8 5.3 H17.8 M9.8 12.5 H17.8" stroke-width="1.6"/></g></svg>
<div class="t" style="left:422.10px;top:610.00px;font-size:13.75px;line-height:25px;color:#252525;letter-spacing:0.072px;">Control ongoing</div>
<div class="t" style="left:668.43px;top:609.00px;font-size:13.19px;line-height:25px;color:#333;letter-spacing:-0.075px;">6.0</div>
<div class="t" style="left:774.31px;top:600.00px;font-size:13.3px;line-height:25px;color:#333;">Period 2,</div>
<div class="t" style="left:774.52px;top:617.00px;font-size:13.3px;line-height:25px;color:#333;">month 7 - 12</div>
<div class="t" style="left:882.68px;top:603.00px;font-size:13.4px;line-height:25px;color:#333;letter-spacing:0.050px;">05/17/2023</div>
<div class="t" style="left:882.43px;top:619.00px;font-size:10.1px;line-height:21px;color:#757575;">1:27 PM</div>
<div class="t" style="left:988.88px;top:603.00px;font-size:13.4px;line-height:25px;color:#333;letter-spacing:0.050px;">05/17/2023</div>
<div class="t" style="left:988.89px;top:619.00px;font-size:10.1px;line-height:21px;color:#757575;">2:06 PM</div>
<div class="t" style="left:1095.08px;top:603.00px;font-size:13.4px;line-height:25px;color:#333;letter-spacing:0.050px;">05/24/2023</div>
<div class="t" style="left:1094.83px;top:619.00px;font-size:10.1px;line-height:21px;color:#757575;">1:10 PM</div>
<div class="t" style="left:0.00px;top:609.00px;font-size:13.3px;line-height:25px;color:#333;left:auto;right:516px;">19.891,77</div>
<div class="t" style="left:0.00px;top:609.00px;font-size:13.3px;line-height:25px;color:#333;left:auto;right:266px;">0,00</div>
<div class="r" style="left:1599.2px;top:605.92px;width:147px;height:32.4px;overflow:hidden"><div style="position:absolute;left:0;top:0;width:170px;height:32.4px;box-sizing:border-box;border:1px solid #a5a5a5;border-radius:4px"></div></div>
<div class="t" style="left:1612.96px;top:609.00px;font-size:13.51px;line-height:25px;color:#b9b9b9;letter-spacing:0.051px;">Open controller work</div>
<div class="t" style="left:317.38px;top:653.00px;font-size:12.4px;line-height:24px;color:#333;">R.10</div>
<div class="r" style="left:390px;top:652.88px;width:150px;height:25.2px;background:#e58387;border-radius:13px"></div>
<svg class="r" style="left:394.3px;top:654.775px;" width="20" height="20" viewBox="0 0 24 24" preserveAspectRatio="none"><path d="M12.5 8c-2.650 0-5.05.99-6.9 2.6L2 7v9h9l-3.62-3.62c1.39-1.16 3.16-1.88 5.12-1.88 3.54 0 6.55 2.31 7.6 5.5l2.37-.78C21.08 11.03 17.15 8 12.5 8z" fill="#1a1a1a"/></svg>
<div class="t" style="left:422.10px;top:653.00px;font-size:13.78px;line-height:25px;color:#252525;letter-spacing:0.087px;">Control reopened</div>
<div class="t" style="left:668.43px;top:652.00px;font-size:13.19px;line-height:25px;color:#333;letter-spacing:-0.075px;">6.0</div>
<div class="t" style="left:774.31px;top:643.00px;font-size:13.3px;line-height:25px;color:#333;">Period 1,</div>
<div class="t" style="left:774.52px;top:661.00px;font-size:13.3px;line-height:25px;color:#333;">month 1 - 6</div>
<div class="t" style="left:882.68px;top:646.00px;font-size:13.4px;line-height:25px;color:#333;letter-spacing:0.050px;">05/16/2023</div>
<div class="t" style="left:882.69px;top:662.00px;font-size:10.1px;line-height:21px;color:#757575;">2:54 PM</div>
<div class="t" style="left:988.88px;top:646.00px;font-size:13.4px;line-height:25px;color:#333;letter-spacing:0.050px;">05/17/2023</div>
<div class="t" style="left:988.63px;top:662.00px;font-size:10.1px;line-height:21px;color:#757575;">1:22 PM</div>
<div class="t" style="left:1095.08px;top:646.00px;font-size:13.4px;line-height:25px;color:#333;letter-spacing:0.050px;">06/15/2023</div>
<div class="t" style="left:1094.83px;top:662.00px;font-size:10.1px;line-height:21px;color:#757575;">11:52 AM</div>
<div class="t" style="left:1344.68px;top:646.00px;font-size:13.4px;line-height:25px;color:#333;letter-spacing:0.050px;">05/17/2023</div>
<div class="t" style="left:1344.43px;top:662.00px;font-size:10.1px;line-height:21px;color:#757575;">1:27 PM</div>
<div class="t" style="left:0.00px;top:652.00px;font-size:13.3px;line-height:25px;color:#333;left:auto;right:516px;">31.577,46</div>
<div class="t" style="left:0.00px;top:652.00px;font-size:13.3px;line-height:25px;color:#333;left:auto;right:266px;">31.180,84</div>
<div class="r" style="left:1599.2px;top:649.17px;width:147px;height:32.4px;overflow:hidden"><div style="position:absolute;left:0;top:0;width:170px;height:32.4px;box-sizing:border-box;border:1px solid #1b6eb4;border-radius:4px"></div></div>
<div class="t" style="left:1612.96px;top:652.00px;font-size:13.51px;line-height:25px;color:#1f67ae;letter-spacing:0.051px;">Open controller work</div>
<div class="r" style="left:311px;top:687.0px;width:1493px;height:43.25px;background:#f4f7fa;"></div>
<div class="t" style="left:317.38px;top:697.00px;font-size:12.4px;line-height:24px;color:#333;">R.9</div>
<div class="r" style="left:390px;top:696.12px;width:95px;height:25.2px;background:#8bcaa6;border-radius:13px"></div>
<svg class="r" style="left:395.3px;top:699.025px;" width="18" height="20" viewBox="0 0 18 20" preserveAspectRatio="none"><path d="M4.1 11 V18.6 L9.2 16.4 L14.3 18.6 V11 Q9.2 14.6 4.1 11z" fill="#1a1a1a"/><circle cx="9.2" cy="6.6" r="5.75" fill="none" stroke="#1a1a1a" stroke-width="1.7"/><path d="M9.2 3.7l.95 2.05 2.2.2-1.65 1.5.5 2.2L9.2 8.5l-1.95 1.15.5-2.2-1.65-1.5 2.2-.2z" fill="#1a1a1a"/></svg>
<div class="t" style="left:422.09px;top:695.00px;font-size:13.94px;line-height:26px;color:#252525;letter-spacing:0.150px;">Certified</div>
<div class="t" style="left:562.16px;top:697.00px;font-size:12.63px;line-height:24px;color:#333;letter-spacing:-0.469px;">PR.2</div>
<div class="r" style="left:563.2px;top:715px;width:25px;height:1px;background:#7fb0d8;"></div>
<div class="t" style="left:668.43px;top:696.00px;font-size:13.19px;line-height:25px;color:#333;letter-spacing:-0.075px;">6.0</div>
<div class="t" style="left:774.31px;top:687.00px;font-size:13.3px;line-height:25px;color:#333;">Period 2,</div>
<div class="t" style="left:774.52px;top:704.00px;font-size:13.3px;line-height:25px;color:#333;">month 7 - 12</div>
<div class="t" style="left:882.68px;top:689.00px;font-size:13.4px;line-height:25px;color:#333;letter-spacing:0.050px;">05/16/2023</div>
<div class="t" style="left:882.73px;top:705.00px;font-size:10.1px;line-height:21px;color:#757575;">9:19 AM</div>
<div class="t" style="left:988.88px;top:689.00px;font-size:13.4px;line-height:25px;color:#333;letter-spacing:0.050px;">05/16/2023</div>
<div class="t" style="left:988.93px;top:705.00px;font-size:10.1px;line-height:21px;color:#757575;">9:31 AM</div>
<div class="t" style="left:1344.68px;top:689.00px;font-size:13.4px;line-height:25px;color:#333;letter-spacing:0.050px;">05/16/2023</div>
<div class="t" style="left:1344.69px;top:705.00px;font-size:10.1px;line-height:21px;color:#757575;">2:52 PM</div>
<div class="t" style="left:0.00px;top:696.00px;font-size:13.3px;line-height:25px;color:#333;left:auto;right:516px;">180.707,57</div>
<div class="t" style="left:0.00px;top:696.00px;font-size:13.3px;line-height:25px;color:#333;left:auto;right:266px;">160.710,06</div>
<div class="r" style="left:1599.2px;top:692.42px;width:147px;height:32.4px;overflow:hidden"><div style="position:absolute;left:0;top:0;width:170px;height:32.4px;box-sizing:border-box;border:1px solid #1b6eb4;border-radius:4px"></div></div>
<div class="t" style="left:1612.96px;top:695.00px;font-size:13.51px;line-height:25px;color:#1f67ae;letter-spacing:0.051px;">Open controller work</div>
</body></html>
